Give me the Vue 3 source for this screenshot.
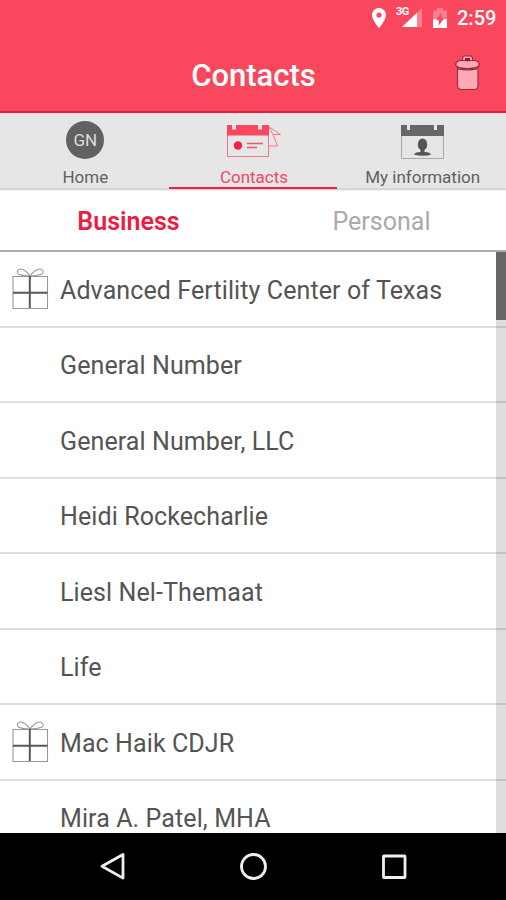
<template>
    <div class="screen">
        <header class="app-header">
            <div class="status-bar">
                <svg class="pin" width="14" height="20" viewBox="0 0 14 20">
                    <path fill="#fff" fill-rule="evenodd"
                        d="M7 0a7 7 0 0 0-7 7c0 5 7 13 7 13s7-8 7-13a7 7 0 0 0-7-7zm0 4.5a2.6 2.6 0 1 1 0 5.2 2.6 2.6 0 0 1 0-5.2z" />
                </svg>
                <div class="signal">
                    <span class="network">3G</span>
                    <svg width="20" height="19" viewBox="0 0 20 19">
                        <path fill="#fff" fill-opacity=".3" d="M20 0v19H0z" />
                        <path fill="#fff" d="M15 4.75V19H0z" />
                    </svg>
                </div>
                <svg class="battery" width="14" height="20" viewBox="0 0 14 20">
                    <path fill="#fff" fill-opacity=".3" d="M0 2.5h4V0h6v2.5h4V11H0z" />
                    <path fill="#fff" d="M0 11h14v9H0z" />
                    <path fill="#f9485d" d="M8.5 4.5v5.8h2.7L5.8 17.5v-5.3H3z" />
                </svg>
                <span class="clock">2:59</span>
            </div>
            <div class="title-bar">
                <h1>Contacts</h1>
                <button class="delete" aria-label="Delete">
                    <svg width="27" height="37" viewBox="0 0 27 37">
                        <g fill="#ffa9b5" stroke="#a02c42" stroke-width="1.2">
                            <path d="M3.500 12.500h20.500v19.500q-.3 3.500-3.500 3.500H7.500Q4 35.500 3.500 32z" />
                            <path d="M8.500 7V4.500Q8.500 2 10.500 2h6q2 0 2 2.500V7z" />
                            <path d="M1.500 10.500Q2.500 6.500 7 6.500h13q4.500 0 5.500 4-1 4-12 4t-12-4z" />
                        </g>
                        <path fill="#8c2438" d="M11 4h5v3.200h-5zM4 14q9.500 2.500 19 0v1.400q-9.500 2-19 0z" />
                    </svg>
                </button>
            </div>
        </header>

        <nav class="tabs">
            <a v-for="tab in tabs" :key="tab.id" class="tab" :class="{ active: tab.id === activeTab }"
                @click="activeTab = tab.id">
                <span class="tab-icon">
                    <span v-if="tab.id === 'home'" class="avatar">GN</span>
                    <svg v-else-if="tab.id === 'contacts'" width="56" height="36" viewBox="0 0 56 36">
                        <g fill="none" stroke="#f0788a" stroke-width="1">
                            <path d="M1.500 11v21.500h41V11" />
                            <path d="M42.500 2.500l12 8h-7.500l4.500 11.500h-9M42.500 2.500l4.500 8" />
                        </g>
                        <path fill="#f9485d" d="M1 1h5v4.500h4V1h22v4.500h4V1h7v10.500H1z" />
                        <circle cx="12" cy="21.500" r="4.200" fill="#ee2347" />
                        <path stroke="#f0546c" stroke-width="1.500" d="M21 19.500h16M21 23.500h10" />
                    </svg>
                    <svg v-else width="45" height="36" viewBox="0 0 45 36">
                        <path fill="none" stroke="#aaa" d="M1.500 11v23.500h42V11" />
                        <path fill="#666" d="M1 1h6v5h3V1h24v5h3V1h7v11H1z" />
                        <ellipse cx="22.500" cy="20.500" rx="4.700" ry="6" fill="#555" />
                        <path fill="#555" d="M20.500 25h4v3q6 .3 6.500 2.800-8 2-17 0 .5-2.500 6.500-2.800z" />
                    </svg>
                </span>
                <span class="tab-label">{{ tab.label }}</span>
            </a>
        </nav>

        <div class="filters">
            <a v-for="filter in filters" :key="filter" class="filter" :class="{ active: filter === activeFilter }"
                @click="activeFilter = filter">{{ filter }}</a>
        </div>

        <main class="list">
            <ul>
                <li v-for="contact in contacts" :key="contact.name">
                    <span class="gift">
                        <svg v-if="contact.gift" width="38" height="43" viewBox="0 0 38 43">
                            <g fill="none" stroke="#999" stroke-width="1.100">
                                <path d="M2 9.500h34.500v32H2z" />
                                <path d="M19 9Q13 1 8.500 2.200 4.500 4 7.500 7.200 12 9 19 9q6-8 11-6.800 4 1.800 1 5Q26 9 19 9z" />
                            </g>
                            <path stroke="#5a5a5a" stroke-width="2" d="M18.800 9v32M2 25.700h34.500" />
                        </svg>
                    </span>
                    <span class="name">{{ contact.name }}</span>
                </li>
            </ul>
            <div class="scrollbar"><div class="thumb"></div></div>
        </main>

        <footer class="nav-bar">
            <svg width="28" height="30" viewBox="0 0 28 30">
                <path d="M25 3.500v23.600L4 15.300z" />
            </svg>
            <svg width="28" height="30" viewBox="0 0 28 30">
                <circle cx="14.500" cy="15.500" r="12" />
            </svg>
            <svg width="28" height="30" viewBox="0 0 28 30">
                <rect x="3.500" y="5" width="21.500" height="21.500" rx=".5" />
            </svg>
        </footer>
    </div>
</template>

<script setup>
import { ref } from 'vue'

const activeTab = ref('contacts')
const activeFilter = ref('Business')

const tabs = [
    { id: 'home', label: 'Home' },
    { id: 'contacts', label: 'Contacts' },
    { id: 'info', label: 'My information' }
]

const filters = ['Business', 'Personal']

const contacts = [
    { name: 'Advanced Fertility Center of Texas', gift: true },
    { name: 'General Number' },
    { name: 'General Number, LLC' },
    { name: 'Heidi Rockecharlie' },
    { name: 'Liesl Nel-Themaat' },
    { name: 'Life' },
    { name: 'Mac Haik CDJR', gift: true },
    { name: 'Mira A. Patel, MHA' }
]
</script>

<style>
body {
    margin: 0;
}
</style>

<style scoped>
.screen {
    display: flex;
    flex-direction: column;
    width: 506px;
    height: 900px;
    overflow: hidden;
    background: #fff;
    color: #545454;
    font-family: Roboto, sans-serif;
}

.app-header {
    box-sizing: border-box;
    flex: none;
    height: 113px;
    background: #f9485d;
    border-bottom: 2px solid #e9163f;
    color: #fff;
}

.status-bar {
    display: flex;
    justify-content: flex-end;
    height: 37px;
    padding-right: 11px;
}

.status-bar svg {
    display: block;
}

.pin,
.battery {
    margin-top: 8px;
}

.signal {
    position: relative;
    width: 20px;
    margin: 8px 11px 0 16px;
}

.network {
    position: absolute;
    left: -6px;
    top: -2px;
    font-size: 11px;
    line-height: 12px;
    font-weight: 700;
    letter-spacing: -.5px;
}

.clock {
    width: 38px;
    margin-left: 10px;
    font-size: 20px;
    line-height: 37px;
    font-weight: 500;
    white-space: nowrap;
}

.title-bar {
    display: grid;
    grid-template-columns: 1fr auto 1fr;
    align-items: center;
    height: 74px;
    padding-right: 25px;
}

h1 {
    grid-column: 2;
    margin: 4px 0 0 26px;
    font-size: 31px;
    line-height: 40px;
    font-weight: 500;
}

.delete {
    justify-self: end;
    height: 37px;
    margin-bottom: 3px;
    padding: 0;
    border: 0;
    background: none;
}

.tabs {
    box-sizing: border-box;
    flex: none;
    display: grid;
    grid-template-columns: repeat(3, 1fr);
    height: 78px;
    background: linear-gradient(#e6e6e6 0 75px, #c9c9c9 76px, #fff 78px);
}

.tab {
    box-sizing: border-box;
    display: flex;
    flex-direction: column;
    align-items: center;
    height: 76px;
    padding: 8px 0 0 2px;
    border-bottom: 2px solid transparent;
    color: #616161;
}

.tab.active {
    border-color: #ee1f43;
    color: #ed4964;
}

.tab-icon {
    display: flex;
    justify-content: center;
    align-items: center;
    height: 38px;
}

.tab-icon svg {
    margin-top: 3px;
}

.avatar {
    width: 38px;
    border-radius: 50%;
    background: #616161;
    color: #ddd;
    font-size: 17px;
    line-height: 38px;
    text-align: center;
}

.tab-label {
    margin-top: 8px;
    font-size: 17px;
    line-height: 20px;
}

.filters {
    box-sizing: border-box;
    flex: none;
    display: grid;
    grid-template-columns: 1fr 1fr;
    height: 61px;
    border-bottom: 2px solid #aaa;
}

.filter {
    padding-left: 4px;
    font-size: 25px;
    line-height: 61px;
    text-align: center;
    color: #aaa;
}

.filter.active {
    color: #ec1c43;
    font-weight: 600;
}

.list {
    position: relative;
    height: 581px;
    overflow: hidden;
}

ul {
    margin: 0;
    padding: 0;
    list-style: none;
}

li {
    box-sizing: border-box;
    display: flex;
    align-items: center;
    height: 75.5px;
    padding-left: 11px;
    border-bottom: 2px solid #dedede;
}

.gift {
    flex: none;
    width: 49px;
    height: 43px;
}

.name {
    font-size: 25px;
    line-height: 30px;
    margin-top: 4px;
    white-space: nowrap;
    letter-spacing: .1px;
}

.scrollbar {
    position: absolute;
    top: 0;
    right: 0;
    width: 10px;
    height: 100%;
    background: rgba(0, 0, 0, .13);
}

.thumb {
    height: 68px;
    background: #666;
}

.nav-bar {
    flex: none;
    display: flex;
    justify-content: center;
    gap: 113px;
    height: 67px;
    background: #000;
}

.nav-bar svg {
    margin-top: 18px;
    fill: none;
    stroke: #efefef;
    stroke-width: 2.8;
    stroke-linejoin: round;
}
</style>
